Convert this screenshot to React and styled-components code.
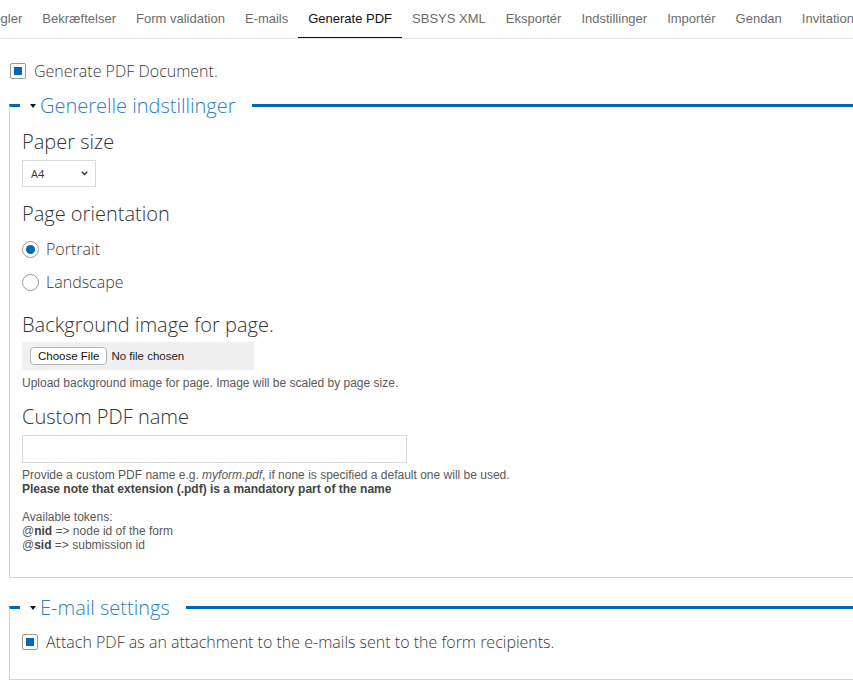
import React from 'react'
import styled, { createGlobalStyle } from 'styled-components'

const GlobalStyle = createGlobalStyle`
    html, body{
        margin: 0;
        padding: 0;
        overflow: hidden;
        background: #fff;
    }
    body{
        font-family: "Open Sans", "Liberation Sans", sans-serif;
        color: #333;
    }
`

const tabs = ['Regler', 'Bekræftelser', 'Form validation', 'E-mails', 'Generate PDF', 'SBSYS XML', 'Eksportér', 'Indstillinger', 'Importér', 'Gendan', 'Invitation']

const Page = styled.div`
    width: 1000px;
`

const TabBar = styled.div`
    display: flex;
    height: 38px;
    border-bottom: 1px solid #e6e6e6;
`

const TabList = styled.ul`
    display: flex;
    margin: 0 0 0 -26px;
    padding: 0;
    list-style: none;
`

const Tab = styled.li`
    height: 38px;
    box-sizing: border-box;
    padding: 0 10px;
    line-height: 37px;
    font-family: "Liberation Sans", Arial, sans-serif;
    font-size: 13px;
    white-space: nowrap;
    color: ${p => p.$active ? '#111' : '#6b6b6b'};
    border-bottom: 1px solid ${p => p.$active ? '#111' : 'transparent'};
`

const Content = styled.div`
    padding: 20px 0 0 9px;
`

const CheckRow = styled.label`
    display: flex;
    align-items: center;
    gap: 8px;
    height: 24px;
    margin-left: ${p => p.$indent || 0}px;
    font-size: 16px;
    font-weight: 300;
    color: #3a3a3a;
`

const CheckBox = styled.span`
    display: flex;
    align-items: center;
    justify-content: center;
    width: 16px;
    height: 16px;
    box-sizing: border-box;
    border: 1px solid #9a9a9a;
    border-radius: 2px;
    background: #fff;
    &::after{
        content: '';
        width: 8px;
        height: 8px;
        background: #0068b4;
    }
`

const Fieldset = styled.fieldset`
    margin: ${p => p.$top || 0}px 0 0;
    padding: ${p => p.$padTop || 8}px 0 ${p => p.$padBottom || 24}px 12px;
    border: 1px solid #d4d4d4;
    border-top: 3px solid #0068b4;
    min-width: 0;
`

const Legend = styled.legend`
    display: flex;
    align-items: center;
    margin-left: -2px;
    padding: 0 16px 0 10px;
    font-size: 20px;
    line-height: 27px;
    font-weight: 300;
    color: #2b80c5;
`

const Caret = styled.span`
    width: 0;
    height: 0;
    margin-right: 4px;
    border-left: 3.5px solid transparent;
    border-right: 3.5px solid transparent;
    border-top: 4px solid #111;
`

const Heading = styled.div`
    margin-top: ${p => p.$top || 0}px;
    font-size: 20px;
    line-height: 27px;
    font-weight: 300;
    color: #333;
`

const SelectWrap = styled.div`
    position: relative;
    width: 74px;
    margin-top: 5px;
    svg{
        position: absolute;
        right: 8px;
        top: 11px;
        pointer-events: none;
    }
`

const Select = styled.select`
    appearance: none;
    width: 74px;
    height: 27px;
    margin: 0;
    padding: 0 8px;
    border: 1px solid #dadada;
    border-radius: 0;
    background: #fff;
    font-family: "Open Sans", sans-serif;
    font-size: 11px;
    color: #333;
    outline: none;
`

const RadioList = styled.div`
    display: flex;
    flex-direction: column;
    gap: 9px;
    margin-top: 10px;
`

const RadioRow = styled.label`
    display: flex;
    align-items: center;
    gap: 7px;
    height: 24px;
    font-size: 16px;
    font-weight: 300;
    color: #3a3a3a;
`

const Radio = styled.span`
    display: flex;
    align-items: center;
    justify-content: center;
    width: 17px;
    height: 17px;
    box-sizing: border-box;
    border: 1px solid #9a9a9a;
    border-radius: 50%;
    &::after{
        content: '';
        display: ${p => p.$checked ? 'block' : 'none'};
        width: 9px;
        height: 9px;
        border-radius: 50%;
        background: #0068b4;
    }
`

const FileBox = styled.div`
    display: flex;
    align-items: center;
    gap: 4px;
    width: 232px;
    height: 28px;
    margin-top: 4px;
    padding-left: 8px;
    box-sizing: border-box;
    background: #f0f0f0;
    font-family: "Liberation Sans", Arial, sans-serif;
    font-size: 11.5px;
    color: #222;
`

const FileButton = styled.button`
    height: 18px;
    padding: 0 7px;
    border: 1px solid #b4b4b4;
    border-radius: 4px;
    background: #fff;
    font-family: "Liberation Sans", Arial, sans-serif;
    font-size: 11.5px;
    color: #111;
`

const Help = styled.div`
    margin-top: ${p => p.$top || 6}px;
    font-family: "Liberation Sans", Arial, sans-serif;
    font-size: 12px;
    line-height: 14px;
    color: #5a5a5a;
    b{
        font-weight: bold;
        color: #444;
    }
`

const TextInput = styled.input`
    display: block;
    width: 385px;
    height: 28px;
    margin-top: 5px;
    box-sizing: border-box;
    border: 1px solid #dadada;
    outline: none;
`

const App = () => {
    return (
        <Page>
            <GlobalStyle />
            <TabBar>
                <TabList>
                    {tabs.map(t => (
                        <Tab key={t} $active={t === 'Generate PDF'}>{t}</Tab>
                    ))}
                </TabList>
            </TabBar>
            <Content>
                <CheckRow $indent={1}>
                    <CheckBox />
                    Generate PDF Document.
                </CheckRow>

                <Fieldset $top={9} $padTop={9} $padBottom={25}>
                    <Legend><Caret />Generelle indstillinger</Legend>

                    <Heading>Paper size</Heading>
                    <SelectWrap>
                        <Select defaultValue="A4">
                            <option value="A4">A4</option>
                            <option value="A3">A3</option>
                            <option value="Letter">Letter</option>
                        </Select>
                        <svg width="7" height="5" viewBox="0 0 7 5">
                            <path d="M0.8 0.8 L3.5 3.6 L6.2 0.8" fill="none" stroke="#333" strokeWidth="1.4" />
                        </svg>
                    </SelectWrap>

                    <Heading $top={13}>Page orientation</Heading>
                    <RadioList>
                        <RadioRow><Radio $checked />Portrait</RadioRow>
                        <RadioRow><Radio />Landscape</RadioRow>
                    </RadioList>

                    <Heading $top={17}>Background image for page.</Heading>
                    <FileBox>
                        <FileButton type="button">Choose File</FileButton>
                        <span>No file chosen</span>
                    </FileBox>
                    <Help>Upload background image for page. Image will be scaled by page size.</Help>

                    <Heading $top={13}>Custom PDF name</Heading>
                    <TextInput type="text" />
                    <Help $top={5}>
                        Provide a custom PDF name e.g. <i>myform.pdf</i>, if none is specified a default one will be used.<br />
                        <b>Please note that extension (.pdf) is a mandatory part of the name</b><br />
                        <br />
                        Available tokens:<br />
                        @<b>nid</b> =&gt; node id of the form<br />
                        @<b>sid</b> =&gt; submission id
                    </Help>
                </Fieldset>

                <Fieldset $top={16} $padTop={9} $padBottom={25}>
                    <Legend><Caret />E-mail settings</Legend>
                    <CheckRow>
                        <CheckBox />
                        Attach PDF as an attachment to the e-mails sent to the form recipients.
                    </CheckRow>
                </Fieldset>
            </Content>
        </Page>
    )
}

export default App
